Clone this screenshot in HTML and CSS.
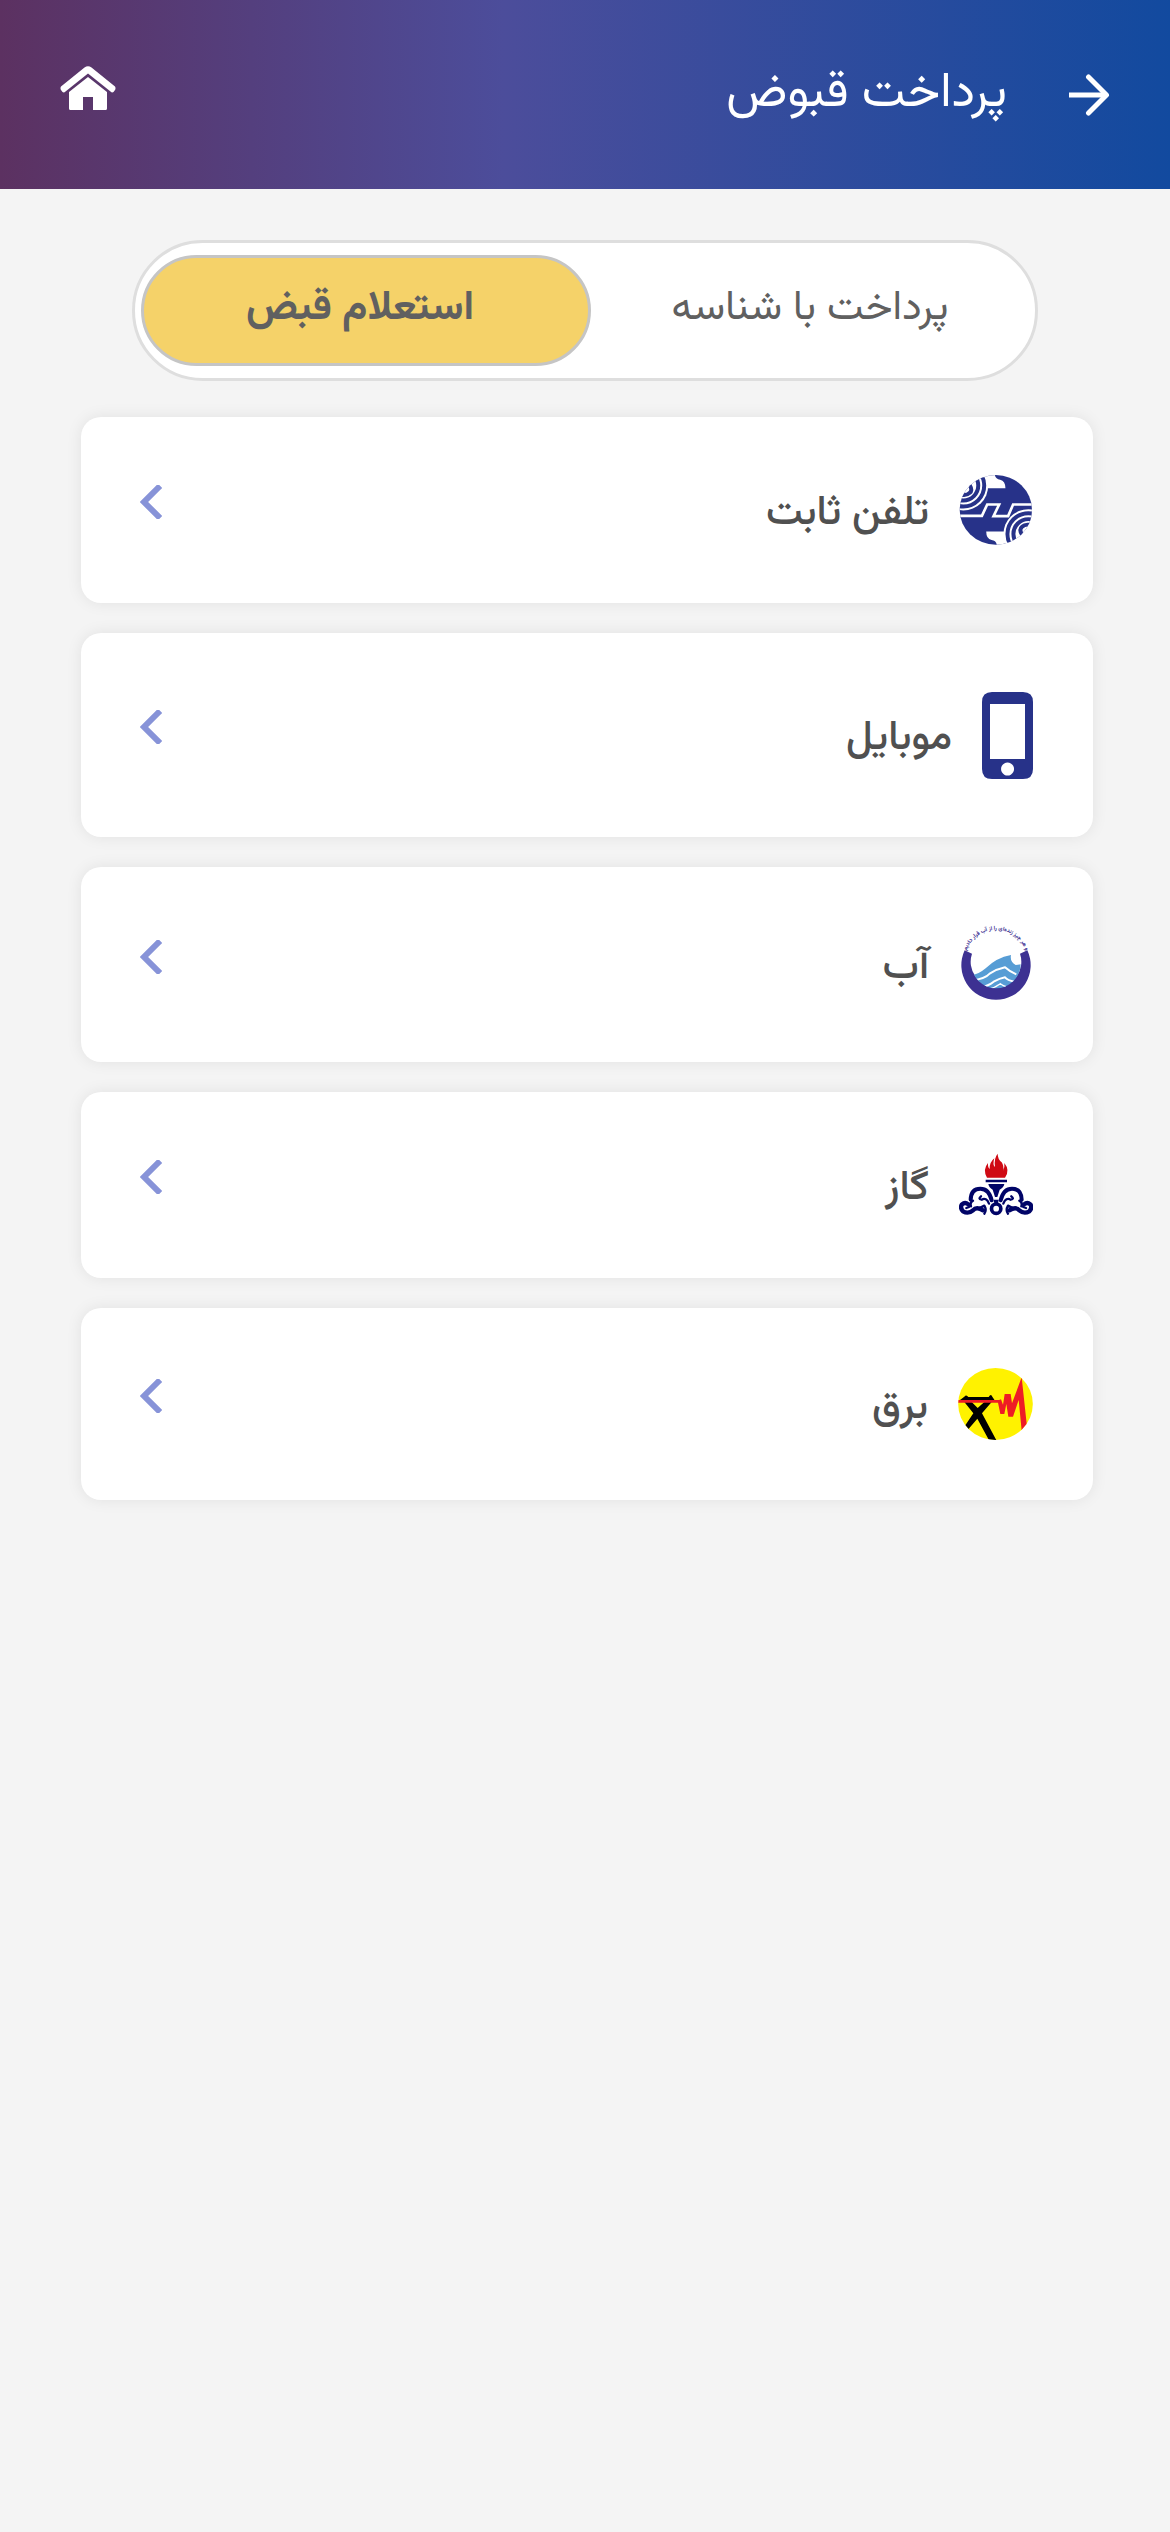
FILE: index.html
```html
<!DOCTYPE html>
<html lang="fa" dir="rtl">
<head>
<meta charset="utf-8">
<meta name="viewport" content="width=device-width, initial-scale=1">
<title>پرداخت قبوض</title>
<link rel="stylesheet" href="styles.css">
</head>
<body>
<header class="topbar">
  <button class="icon-button" type="button" aria-label="بازگشت">
    <svg width="42" height="42" viewBox="0 0 42 42" fill="none" stroke="#fff" stroke-width="5" stroke-linecap="round" stroke-linejoin="round"><path d="M1 21H38" stroke-linecap="butt"/><path d="M20.500 3L38.500 21L20.500 39"/></svg>
  </button>
  <h1 class="title">پرداخت قبوض</h1>
  <a class="icon-button home" href="#" aria-label="خانه">
    <svg width="56" height="44" viewBox="0 0 56 44" fill="#fff"><path d="M1 20.500L24.500 1.500Q28 -1 31.500 1.500L55 20.500Q56 22 55 24L53.500 26Q52 27 50.500 25.500L28 7.500L5.500 25.500Q4 27 2.500 26L1 24Q0 22 1 20.500Z"/><path d="M28 11L47 26V42.500Q47 44 45.500 44H33V31H23V44H10.500Q9 44 9 42.500V26Z"/></svg>
  </a>
</header>
<main class="content">
  <div class="tabs" role="tablist">
    <button class="tab" type="button" role="tab" aria-selected="false">پرداخت با شناسه</button>
    <button class="tab tab-active" type="button" role="tab" aria-selected="true">استعلام قبض</button>
  </div>
  <ul class="bills">
    <li><a class="bill" href="#">
      <svg class="logo" width="74" height="70" viewBox="54 44 219 211">
        <defs>
          <clipPath id="disc"><ellipse cx="163" cy="149" rx="109" ry="105"/></clipPath>
          <g id="half">
            <path fill="#fff" d="M118 30H158L160 44Q163 57 176 58Q192 62 192 84H138Z"/>
            <circle cx="65" cy="76" r="75" fill="#fff"/>
            <g fill="none" stroke="#273289"><circle cx="65" cy="76" r="63" stroke-width="12"/><circle cx="65" cy="76" r="45" stroke-width="12"/><path d="M84 74Q94 90 84 98Q76 106 62 104" stroke-width="12"/></g>
          </g>
        </defs>
        <g clip-path="url(#disc)"><rect x="50" y="40" width="230" height="220" fill="#273289"/><use href="#half"/><use href="#half" transform="rotate(180 163 149)"/><path d="M50 167H121L137 133H173L156 168H200L215 133H276" fill="none" stroke="#fff" stroke-width="8"/></g>
      </svg>
      <span class="label">تلفن ثابت</span>
      <svg class="chevron" width="22" height="34" viewBox="0 0 22 34"><path d="M18 3L4 17L18 31"/></svg>
    </a></li>
    <li><a class="bill" href="#">
      <svg class="logo" width="51" height="88" viewBox="0 0 51 88"><path fill="#273289" fill-rule="evenodd" d="M10 1H41Q51 1 51 11V78Q51 88 41 88H10Q0 88 0 78V11Q0 1 10 1ZM8 13V68H43V13ZM25.500 71.500a6.500 6.500 0 1 0 .1 0Z"/></svg>
      <span class="label">موبایل</span>
      <svg class="chevron" width="22" height="34" viewBox="0 0 22 34"><path d="M18 3L4 17L18 31"/></svg>
    </a></li>
    <li><a class="bill" href="#">
      <svg class="logo" width="74" height="79" viewBox="52 30 222 237">
        <defs><clipPath id="bowl"><circle cx="163" cy="146" r="74"/></clipPath><path id="arc" d="M74 108A94 94 0 0 1 252 108"/></defs>
        <path fill="#3d3192" d="M69 106L91 116A76 76 0 1 0 235 116L257 106A104 104 0 1 1 69 106Z"/>
        <g clip-path="url(#bowl)"><path fill="#579dd5" d="M80 182Q106 182 132 160Q164 128 208 120Q204 140 222 150L250 146V240H80Z"/><path d="M92 196Q130 192 144 176Q166 162 190 157Q204 170 224 178M114 218Q142 212 156 200Q174 190 190 187Q198 196 218 200" fill="none" stroke="#fff" stroke-width="6"/><path d="M138 224Q160 218 176 206Q184 212 196 216" fill="none" stroke="#fff" stroke-width="4"/></g>
        <text class="motto" direction="rtl"><textPath href="#arc" startOffset="50%">و هر چیز زنده‌ای را از آب قرار دادیم</textPath></text>
      </svg>
      <span class="label">آب</span>
      <svg class="chevron" width="22" height="34" viewBox="0 0 22 34"><path d="M18 3L4 17L18 31"/></svg>
    </a></li>
    <li><a class="bill" href="#">
      <svg class="logo" width="74" height="70" viewBox="52 27 222 210">
        <path fill="#cf0a14" d="M136 110Q122 86 139 66Q138 80 144 84Q143 64 158 52Q152 72 160 78Q156 52 168 38Q168 54 180 64Q188 76 184 90Q190 80 188 66Q206 88 190 110Z"/>
        <g fill="#000467"><path d="M132 116H196V124H132ZM140 129H188Q186 140 174 146L167 168H160L153 146Q142 140 140 129Z"/></g>
        <g id="scroll" fill="none" stroke="#000467" stroke-linecap="round"><path d="M87 176Q88 143 116 143Q142 143 150 178" stroke-width="12"/><path d="M80 190Q70 182 61 190Q54 200 64 211Q80 220 94 208Q104 196 124 208" stroke-width="13"/><path d="M94 179Q84 184 88 196M82 198L74 201M128 218Q136 208 128 194M128 194L112 202M118 166Q108 174 120 176Q134 168 142 188" stroke-width="7"/></g>
        <use href="#scroll" transform="matrix(-1 0 0 1 327 0)"/>
        <circle cx="163.500" cy="203" r="14" fill="none" stroke="#000467" stroke-width="11"/><path d="M156 176H171L168 192H159Z" fill="#000467"/>
      </svg>
      <span class="label">گاز</span>
      <svg class="chevron" width="22" height="34" viewBox="0 0 22 34"><path d="M18 3L4 17L18 31"/></svg>
    </a></li>
    <li><a class="bill" href="#">
      <svg class="logo" width="75" height="76" viewBox="51 48 225 228">
        <defs><clipPath id="sun"><ellipse cx="163.500" cy="162" rx="112" ry="108"/></clipPath></defs>
        <ellipse cx="163.500" cy="162" rx="112" ry="108" fill="#fff200"/>
        <g clip-path="url(#sun)"><path d="M56 151L70 140Q76 132 82 141H143Q150 130 154 140L162 152Z"/><path d="M70 156H92L110 174L130 156H152L123 190L170 278H148L109 206L80 240L66 236L97 190Z"/><path fill="#ee1c25" d="M50 150H174L180 148L186 164L191 132H209L213 160L242 82L258 230L242 242L233 150L216 200H202L196 162L190 192H178L171 158H50Z"/></g>
      </svg>
      <span class="label">برق</span>
      <svg class="chevron" width="22" height="34" viewBox="0 0 22 34"><path d="M18 3L4 17L18 31"/></svg>
    </a></li>
  </ul>
</main>
</body>
</html>
```
FILE: styles.css
```css
* {
  box-sizing: border-box;
}

body {
  margin: 0;
  min-height: 100vh;
  background: #f4f4f4;
  color: #505050;
  font-family: "Vazirmatn", "Noto Sans Arabic", "DejaVu Sans", sans-serif;
}

.topbar {
  display: flex;
  align-items: center;
  gap: 61px;
  height: 189px;
  padding: 0 60px;
  background: linear-gradient(to right, #5c3161 0%, #4c4d9b 43%, #124a9f 100%);
  color: #fff;
}

.icon-button {
  display: flex;
  padding: 0;
  border: 0;
  background: none;
}

.icon-button svg {
  display: block;
}

.home {
  margin-inline-start: auto;
  padding-bottom: 14px;
}

.title {
  margin: 0;
  padding-bottom: 2px;
  font-size: 49px;
  font-weight: 400;
  line-height: 60px;
}

.content {
  padding: 51px 77px 60px 81px;
}

.tabs {
  display: flex;
  height: 141px;
  margin: 0 55px 36px 51px;
  padding: 12px 6px;
  border: 3px solid #dedede;
  border-radius: 71px;
  background: #fff;
}

.tab {
  flex: 1;
  padding: 0 0 4px;
  border: 3px solid transparent;
  border-radius: 56px;
  background: none;
  color: #606060;
  font-family: inherit;
  font-size: 41px;
}

.tab-active {
  padding-right: 12px;
  border-color: #c5c5c5;
  background: #f5d269;
  font-weight: 700;
}

.bills {
  display: flex;
  flex-direction: column;
  gap: 30px;
  margin: 0;
  padding: 0;
  list-style: none;
}

.bill {
  display: flex;
  align-items: center;
  gap: 30px;
  padding: 58px 60px 58px 59px;
  border-radius: 20px;
  background: #fff;
  box-shadow: 0 0 16px rgba(0, 0, 0, 0.08);
  color: inherit;
  text-decoration: none;
}

.logo {
  display: block;
  flex: none;
}

.label {
  padding-top: 7px;
  font-size: 41px;
  font-weight: 500;
  line-height: 60px;
}

.chevron {
  box-sizing: content-box;
  margin-inline-start: auto;
  padding-bottom: 16px;
  fill: none;
  stroke: #8793d8;
  stroke-width: 6;
  stroke-linecap: square;
}

.motto {
  fill: #3d3192;
  font-size: 17px;
  font-weight: 700;
  text-anchor: middle;
}
```
